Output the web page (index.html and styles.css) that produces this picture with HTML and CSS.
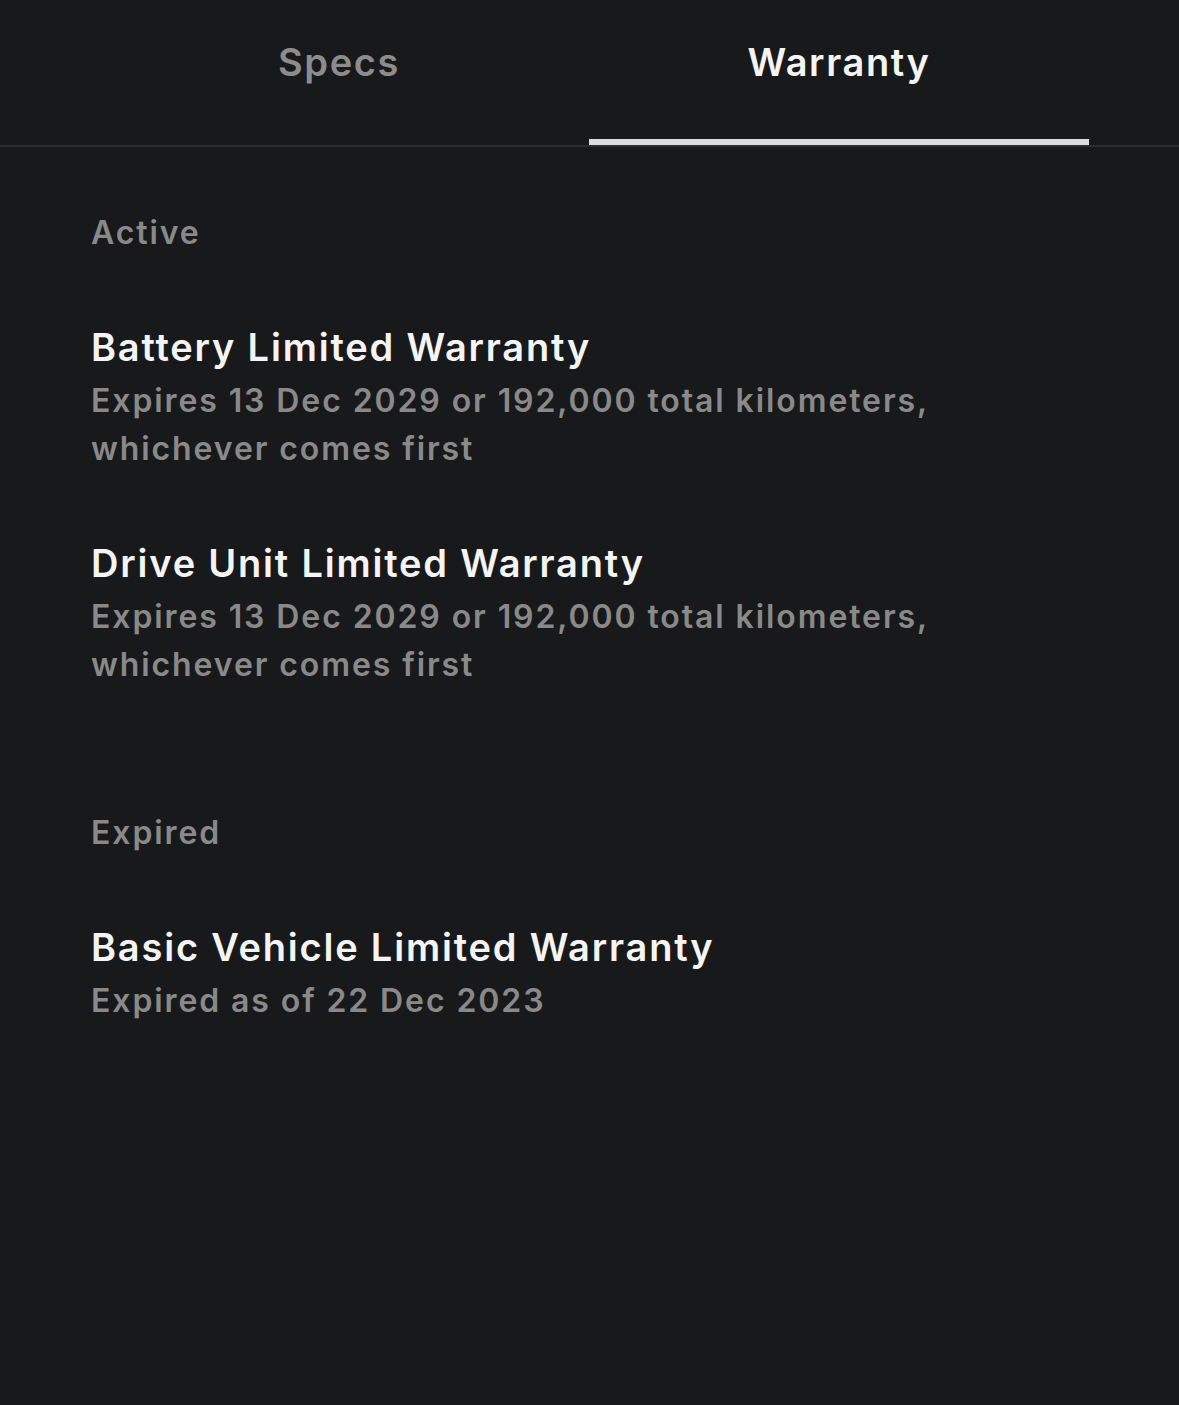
FILE: index.html
```html
<!DOCTYPE html>
<html lang="en">
<head>
<meta charset="utf-8">
<title>Warranty</title>
<link rel="stylesheet" href="styles.css">
</head>
<body>
<div class="page">
  <nav class="tabs">
    <div class="tab">Specs</div>
    <div class="tab tab-active">Warranty</div>
  </nav>
  <main class="content">
    <section class="section">
      <h2 class="section-label">Active</h2>
      <div class="item">
        <div class="item-title">Battery Limited Warranty</div>
        <div class="item-sub">Expires 13 Dec 2029 or 192,000 total kilometers,<br>whichever comes first</div>
      </div>
      <div class="item">
        <div class="item-title">Drive Unit Limited Warranty</div>
        <div class="item-sub">Expires 13 Dec 2029 or 192,000 total kilometers,<br>whichever comes first</div>
      </div>
    </section>
    <section class="section">
      <h2 class="section-label">Expired</h2>
      <div class="item">
        <div class="item-title">Basic Vehicle Limited Warranty</div>
        <div class="item-sub">Expired as of 22 Dec 2023</div>
      </div>
    </section>
  </main>
</div>
</body>
</html>
```
FILE: styles.css
```css
html, body {
  margin: 0;
  padding: 0;
  background: #18191b;
}
body {
  font-family: Inter, "Noto Sans", sans-serif;
  font-weight: 600;
  color: #f2f2f2;
  min-height: 1405px;
}
.tabs {
  display: grid;
  grid-template-columns: 500px 500px;
  padding: 0 90px 0 89px;
  border-bottom: 2px solid #2c2d30;
}
.tab {
  box-sizing: border-box;
  height: 145px;
  padding-top: 37px;
  border-bottom: 6px solid transparent;
  text-align: center;
  font-size: 38px;
  line-height: 50px;
  letter-spacing: 1.6px;
  color: #8c8c8c;
}
.tab-active {
  color: #f4f4f4;
  border-bottom-color: #dcdcdc;
}
.content {
  padding: 62px 91px 0 91px;
  display: flex;
  flex-direction: column;
  gap: 120px;
}
.section {
  display: flex;
  flex-direction: column;
  gap: 60px;
}
.section-label {
  margin: 0;
  font-size: 32px;
  font-weight: 600;
  line-height: 48px;
  letter-spacing: 1.9px;
  color: #898989;
}
.item-title {
  font-size: 38px;
  line-height: 60px;
  letter-spacing: 1.8px;
  color: #f4f4f4;
}
.item-sub {
  font-size: 32px;
  line-height: 48px;
  letter-spacing: 1.9px;
  color: #898989;
}
```
